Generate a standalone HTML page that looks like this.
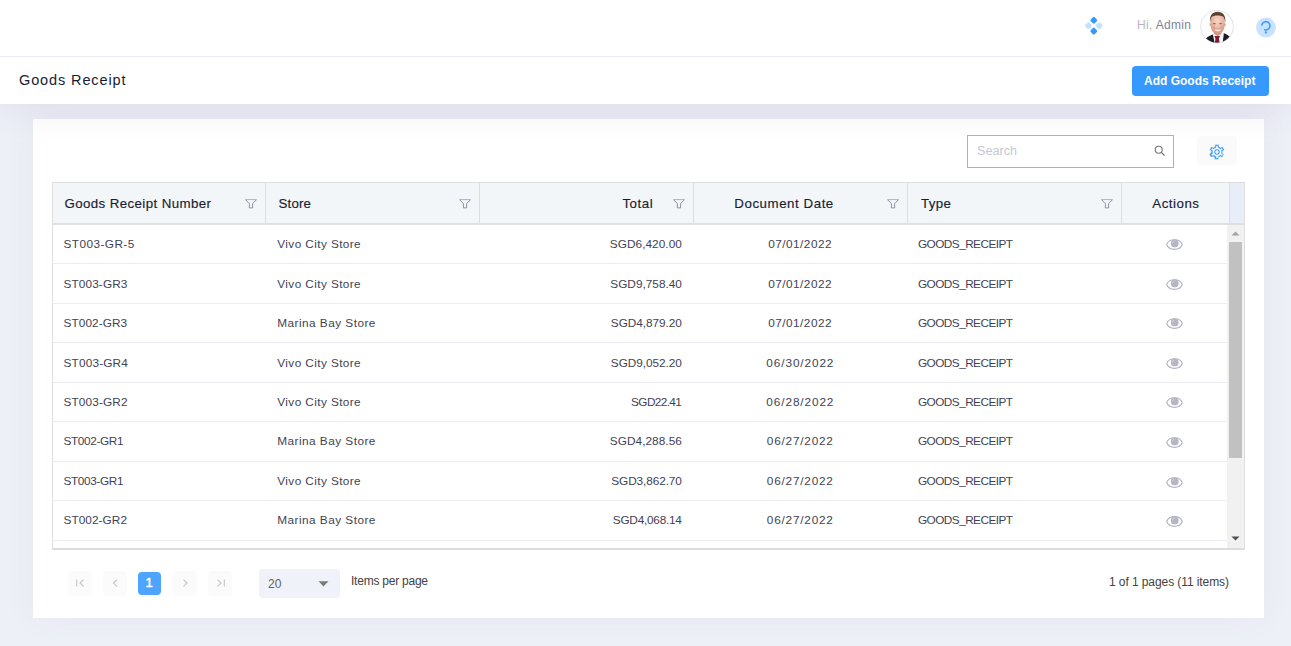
<!DOCTYPE html>
<html lang="en">
<head>
<meta charset="utf-8">
<title>Goods Receipt</title>
<style>
*{box-sizing:border-box;margin:0;padding:0}
html,body{width:1291px;height:646px;overflow:hidden}
body{background:#eef0f8;font-family:"Liberation Sans",sans-serif;color:#3f4254;position:relative}
.topbar{position:absolute;left:0;top:0;width:1291px;height:57px;background:#fff;border-bottom:1px solid #ebedf3}
.subhead{position:absolute;left:0;top:57px;width:1291px;height:47px;background:#fff;box-shadow:0 10px 30px 0 rgba(82,63,105,.08)}
.title{position:absolute;left:19px;top:69px;font-size:14.5px;line-height:22px;color:#181c32;white-space:nowrap;letter-spacing:0.882px}
.hi{position:absolute;top:16px;left:1137px;font-size:12px;letter-spacing:0.331px;line-height:18px;white-space:nowrap;color:#b5b5c3}
.hi b{font-weight:normal;color:#7e8299}
.addbtn{position:absolute;left:1132px;top:66px;width:137px;height:30px;border-radius:4px;background:#3699ff;color:#fff;font-size:12px;font-weight:bold;line-height:30px;padding-left:12px;white-space:nowrap;letter-spacing:0.004px}
.card{position:absolute;left:33px;top:119px;width:1231px;height:499px;background:#fff;box-shadow:0 0 30px 0 rgba(82,63,105,.05)}
.search{position:absolute;left:967px;top:135px;width:207px;height:33px;border:1px solid #b0b0b0;background:#fff}
.search span{position:absolute;left:9px;top:7px;letter-spacing:0.079px;font-size:12.5px;line-height:16px;color:#c5c7d2}
.search svg{position:absolute;left:185px;top:8px}
.gear{position:absolute;left:1197px;top:136px;width:40px;height:29px;border-radius:4px;background:#fafafb}
.gear svg{position:absolute;left:11px;top:6.500px}
.grid{position:absolute;left:52px;top:182px;width:1193px;height:368px;border:1px solid #dedede;border-bottom:2px solid #dcdcdc;background:#fff;overflow:hidden}
.ghead{position:absolute;left:0;top:0;width:1191px;height:42px;background:#f3f6f9;border-bottom:2px solid #dfdfdf}
.spacer{position:absolute;left:1176px;top:0;width:15px;height:40px;background:#e9edf8;border-left:1px solid #dcdde6}
.th{position:absolute;top:0;height:40px;font-size:13.3px;-webkit-text-stroke:.15px #181c32;color:#181c32;line-height:40px;white-space:nowrap}
.th.b{border-left:1px solid #dddddd}
.th span{position:absolute;top:1px}
.flt{position:absolute;top:16px}
.row{position:absolute;left:0;width:1174px;border-bottom:1px solid #ebedf3;font-size:11.8px;color:#3f4254;white-space:nowrap}
.row span{position:absolute;line-height:20px}
.eye{position:absolute;left:1112.500px}
.sb{position:absolute;left:1174px;top:42px;width:17px;height:324px;background:#f1f1f1}
.sb i{position:absolute;left:2px;top:17px;width:13px;height:216px;background:#c1c1c1}
.pg{position:absolute;top:571.200px;width:24px;height:24.500px;border-radius:4px;background:#fbfbfc}
.pg svg{position:absolute;left:0;top:0}
.pg.on{background:#4da5ff;color:#fff;font-size:13px;-webkit-text-stroke:.5px #fff;line-height:22px;text-align:center;top:572px;width:23px;height:23px;padding-right:1px}
.sel{position:absolute;left:259px;top:569px;width:81px;height:29px;border-radius:4px;background:#eff3f9;font-size:12px;line-height:29px;color:#616161}
.sel span{position:absolute;left:9px;top:1px}
.sel svg{position:absolute;left:59px;top:12px}
.ipp{position:absolute;left:351px;top:572px;font-size:12px;letter-spacing:-0.234px;line-height:18px;color:#424242;white-space:nowrap}
.info{position:absolute;left:1109px;top:573px;font-size:12px;letter-spacing:-0.084px;line-height:18px;color:#424242;white-space:nowrap}
</style>
</head>
<body>
<div class="card"></div>
<div class="subhead"></div>
<div class="topbar"></div>
<svg style="position:absolute;left:1084px;top:16px" width="20" height="20" viewBox="0 0 20 20">
<g transform="translate(9.800 9.700)">
<rect x="-2.800" y="-2.800" width="5.600" height="5.600" rx="1.300" transform="translate(0 -5.400) rotate(45)" fill="#3699ff"/>
<rect x="-2.800" y="-2.800" width="5.600" height="5.600" rx="1.300" transform="translate(0 5.400) rotate(45)" fill="#3699ff"/>
<rect x="-2.800" y="-2.800" width="5.600" height="5.600" rx="1.300" transform="translate(-5.400 0) rotate(45)" fill="#3699ff" opacity=".3"/>
<rect x="-2.800" y="-2.800" width="5.600" height="5.600" rx="1.300" transform="translate(5.400 0) rotate(45)" fill="#3699ff" opacity=".3"/>
</g></svg>
<div class="hi">Hi, <b>Admin</b></div>
<svg style="position:absolute;left:1200px;top:10px" width="34" height="34" viewBox="0 0 34 34">
<defs><clipPath id="av"><circle cx="17" cy="16.700" r="16"/></clipPath><filter id="bl" x="-20%" y="-20%" width="140%" height="140%"><feGaussianBlur stdDeviation="0.600"/></filter>
<radialGradient id="sk" cx="50%" cy="35%" r="65%"><stop offset="0" stop-color="#f6d6c6"/><stop offset=".6" stop-color="#e9b7a0"/><stop offset="1" stop-color="#d08f78"/></radialGradient>
<linearGradient id="hr" x1="0" y1="0" x2="0" y2="1"><stop offset="0" stop-color="#694735"/><stop offset="1" stop-color="#3a261d"/></linearGradient></defs>
<circle cx="17" cy="16.700" r="16.400" fill="#fff" stroke="#e1e3ec" stroke-width="1"/>
<g clip-path="url(#av)" filter="url(#bl)">
<path d="M5.800 28.400c1.700-1.600 4.400-3 7.200-4l4.700 2.500 6.300-3.700c2.600 1 4.600 2.200 6 3.900v8H5.800z" fill="#1b1b20"/>
<path d="M12.900 24.500l4.700-1.700 6.300.8-1.400 10h-7.800z" fill="#f7f7fb"/>
<path d="M14.400 26h5.600l-1.100 2.400 1 6h-5.400l1-6z" fill="#7b1d2f"/>
<path d="M14.300 20.500h6.800v3.800l-3.400 1.700-3.400-1.700z" fill="#d69680"/>
<path d="M10.700 10c0-4.500 2.900-6.500 6.900-6.500s7 2 7 6.500v5.200c0 4.800-3.600 9.600-7 9.600s-6.900-4.800-6.900-9.600z" fill="url(#sk)"/>
<ellipse cx="10.500" cy="14.600" rx=".9" ry="1.700" fill="#dca28b"/><ellipse cx="24.800" cy="14.600" rx=".9" ry="1.700" fill="#dca28b"/>
<path d="M10.100 12.800C9.200 5.600 12.600 1.800 17.600 1.800s8.600 3.800 7.600 11c-.3-2.500-.8-4.600-1.700-6-1.700-.9-3.700-1.400-5.900-1.400s-4.200.5-5.900 1.400c-.9 1.400-1.400 3.500-1.600 6z" fill="url(#hr)"/>
<ellipse cx="14.300" cy="13.700" rx="1.500" ry=".65" fill="#5b4036" opacity=".7"/><ellipse cx="20.600" cy="13.700" rx="1.500" ry=".65" fill="#5b4036" opacity=".7"/>
<ellipse cx="13.300" cy="17" rx="1.800" ry="1.400" fill="#e29a88" opacity=".6"/><ellipse cx="21.800" cy="17" rx="1.800" ry="1.400" fill="#e29a88" opacity=".6"/>
<path d="M14.500 18.700c2 .8 4.400.8 6.400 0-.6 1.700-1.900 2.500-3.200 2.500s-2.600-.8-3.200-2.500z" fill="#fbefeb"/>
<path d="M14.200 18.500c2.100.9 4.900.9 7 0" fill="none" stroke="#b5685c" stroke-width=".5"/>
</g></svg>
<svg style="position:absolute;left:1255px;top:17px" width="22" height="22" viewBox="0 0 22 22"><circle cx="11" cy="10.500" r="9.900" fill="#c9e2ff"/><path d="M6.800 8.100A4.100 4.100 0 1 1 9.600 12.700" fill="none" stroke="#3699ff" stroke-width="1.500" stroke-linecap="round"/><circle cx="10.900" cy="15.400" r="1.050" fill="#3699ff"/></svg>
<div class="title">Goods Receipt</div>
<div class="addbtn">Add Goods Receipt</div>
<div class="search"><span>Search</span><svg width="14" height="14" viewBox="0 0 14 14"><circle cx="5.700" cy="5.700" r="3.500" fill="none" stroke="#757575" stroke-width="1.100"/><path d="M8.300 8.300l3.200 3.200" stroke="#757575" stroke-width="1.200"/></svg></div>
<div class="gear"><svg width="18" height="18" viewBox="0 0 24 24"><path fill="#3699ff" stroke="#fafafb" stroke-width=".600" d="M19.430 12.980c.04-.32.070-.64.070-.98 0-.34-.03-.66-.07-.98l2.110-1.650c.19-.15.240-.42.120-.64l-2-3.460c-.09-.16-.26-.25-.44-.25-.06 0-.12.010-.17.030l-2.490 1c-.52-.4-1.080-.73-1.690-.98l-.38-2.650C14.460 2.180 14.250 2 14 2h-4c-.25 0-.46.180-.49.420l-.38 2.650c-.61.250-1.170.59-1.690.98l-2.490-1c-.06-.02-.12-.03-.18-.03-.17 0-.34.090-.43.250l-2 3.460c-.13.220-.07.490.12.640l2.110 1.650c-.4.320-.7.650-.7.980 0 .33.030.66.070.98l-2.110 1.650c-.19.150-.24.420-.12.640l2 3.460c.9.160.26.250.44.250.06 0 .12-.1.170-.03l2.490-1c.52.400 1.080.73 1.690.98l.38 2.650c.3.240.24.420.49.420h4c.25 0 .46-.18.490-.42l.38-2.650c.61-.25 1.170-.59 1.690-.98l2.490 1c.6.020.12.030.18.030.17 0 .34-.09.430-.25l2-3.460c.12-.22.070-.49-.12-.64l-2.110-1.650zm-1.980-1.710c.4.310.5.520.5.730 0 .21-.2.430-.5.730l-.14 1.130.89.700 1.080.84-.7 1.210-1.270-.51-1.040-.42-.9.680c-.43.320-.84.560-1.250.73l-1.060.43-.16 1.130-.2 1.350h-1.400l-.19-1.350-.16-1.130-1.060-.43c-.43-.18-.83-.41-1.230-.71l-.91-.7-1.060.43-1.270.51-.7-1.210 1.080-.84.890-.7-.14-1.130c-.03-.31-.05-.54-.05-.74s.02-.43.050-.73l.14-1.130-.89-.7-1.080-.84.700-1.210 1.270.51 1.040.42.900-.68c.43-.32.840-.56 1.250-.73l1.060-.43.160-1.130.2-1.350h1.390l.19 1.350.16 1.130 1.060.43c.43.180.83.410 1.230.71l.91.700 1.060-.43 1.270-.51.700 1.210-1.070.85-.89.700.14 1.130zM12 8c-2.210 0-4 1.790-4 4s1.790 4 4 4 4-1.790 4-4-1.790-4-4-4zm0 6c-1.100 0-2-.9-2-2s.9-2 2-2 2 .9 2 2-.9 2-2 2z"/></svg></div>
<div class="grid">
<div class="ghead">
<div class="th" style="left:0;width:213px"><span style="left:11.5px;letter-spacing:0.396px">Goods Receipt Number</span><svg class="flt" style="left:192.2px" width="12" height="10" viewBox="0 0 12 10"><path d="M0.500 0.600L4.400 4.700V8.900H7.600V4.700L11.500 0.600" fill="none" stroke="#82849a" stroke-width="0.900" stroke-linejoin="round"/><path d="M0.500 0.600h11" stroke="#9c9eb0" stroke-width="0.800"/></svg></div>
<div class="th b" style="left:212px;width:214px"><span style="left:12.5px;letter-spacing:0.177px">Store</span><svg class="flt" style="left:193.2px" width="12" height="10" viewBox="0 0 12 10"><path d="M0.500 0.600L4.400 4.700V8.900H7.600V4.700L11.500 0.600" fill="none" stroke="#82849a" stroke-width="0.900" stroke-linejoin="round"/><path d="M0.500 0.600h11" stroke="#9c9eb0" stroke-width="0.800"/></svg></div>
<div class="th b" style="left:426px;width:214px"><span style="left:142.4px;letter-spacing:0.551px">Total</span><svg class="flt" style="left:193.2px" width="12" height="10" viewBox="0 0 12 10"><path d="M0.500 0.600L4.400 4.700V8.900H7.600V4.700L11.500 0.600" fill="none" stroke="#82849a" stroke-width="0.900" stroke-linejoin="round"/><path d="M0.500 0.600h11" stroke="#9c9eb0" stroke-width="0.800"/></svg></div>
<div class="th b" style="left:640px;width:214px"><span style="left:40.3px;letter-spacing:0.549px">Document Date</span><svg class="flt" style="left:193.2px" width="12" height="10" viewBox="0 0 12 10"><path d="M0.500 0.600L4.400 4.700V8.900H7.600V4.700L11.500 0.600" fill="none" stroke="#82849a" stroke-width="0.900" stroke-linejoin="round"/><path d="M0.500 0.600h11" stroke="#9c9eb0" stroke-width="0.800"/></svg></div>
<div class="th b" style="left:854px;width:214px"><span style="left:13px;letter-spacing:0.322px">Type</span><svg class="flt" style="left:193.2px" width="12" height="10" viewBox="0 0 12 10"><path d="M0.500 0.600L4.400 4.700V8.900H7.600V4.700L11.500 0.600" fill="none" stroke="#82849a" stroke-width="0.900" stroke-linejoin="round"/><path d="M0.500 0.600h11" stroke="#9c9eb0" stroke-width="0.800"/></svg></div>
<div class="th b" style="left:1068px;width:108px"><span style="left:30.3px;letter-spacing:0.514px">Actions</span></div>
<div class="spacer"></div>
</div>
<div class="row" style="top:42px;height:39px"><span style="top:9px;left:10.5px;letter-spacing:0.434px">ST003-GR-5</span><span style="top:9px;left:224.3px;letter-spacing:0.398px">Vivo City Store</span><span style="top:9px;left:556.8px;letter-spacing:0.06px">SGD6,420.00</span><span style="top:9px;left:715.3px;letter-spacing:0.46px">07/01/2022</span><span style="top:9px;left:865px;letter-spacing:-0.553px">GOODS_RECEIPT</span><svg class="eye" style="top:14.15px" width="17" height="11" viewBox="0 0 17 11"><path d="M0.700 5.500C1.500 3.300 4.300 0.700 8.500 0.700s7 2.600 7.800 4.800C15.500 7.700 12.700 10.300 8.500 10.300S1.500 7.700 0.700 5.500z" fill="#fff" stroke="#b5b5c3" stroke-width="1.150"/><circle cx="8.700" cy="4.400" r="3.900" fill="#b5b5c3"/><path d="M6.500 4.300a2.300 2.300 0 0 1 2-2.200" fill="none" stroke="#dcdce4" stroke-width=".8"/></svg></div>
<div class="row" style="top:81px;height:40px"><span style="top:10px;left:10.5px;letter-spacing:0.117px">ST003-GR3</span><span style="top:10px;left:224.3px;letter-spacing:0.398px">Vivo City Store</span><span style="top:10px;left:557.3px;letter-spacing:0.01px">SGD9,758.40</span><span style="top:10px;left:715.3px;letter-spacing:0.46px">07/01/2022</span><span style="top:10px;left:865px;letter-spacing:-0.553px">GOODS_RECEIPT</span><svg class="eye" style="top:14.73px" width="17" height="11" viewBox="0 0 17 11"><path d="M0.700 5.500C1.500 3.300 4.300 0.700 8.500 0.700s7 2.600 7.800 4.800C15.500 7.700 12.700 10.300 8.500 10.300S1.500 7.700 0.700 5.500z" fill="#fff" stroke="#b5b5c3" stroke-width="1.150"/><circle cx="8.700" cy="4.400" r="3.900" fill="#b5b5c3"/><path d="M6.500 4.300a2.300 2.300 0 0 1 2-2.200" fill="none" stroke="#dcdce4" stroke-width=".8"/></svg></div>
<div class="row" style="top:121px;height:39px"><span style="top:9px;left:10.5px;letter-spacing:0.08px">ST002-GR3</span><span style="top:9px;left:224.3px;letter-spacing:0.462px">Marina Bay Store</span><span style="top:9px;left:557.8px;letter-spacing:-0.04px">SGD4,879.20</span><span style="top:9px;left:715.3px;letter-spacing:0.46px">07/01/2022</span><span style="top:9px;left:865px;letter-spacing:-0.553px">GOODS_RECEIPT</span><svg class="eye" style="top:14.31px" width="17" height="11" viewBox="0 0 17 11"><path d="M0.700 5.500C1.500 3.300 4.300 0.700 8.500 0.700s7 2.600 7.800 4.800C15.500 7.700 12.700 10.300 8.500 10.300S1.500 7.700 0.700 5.500z" fill="#fff" stroke="#b5b5c3" stroke-width="1.150"/><circle cx="8.700" cy="4.400" r="3.900" fill="#b5b5c3"/><path d="M6.500 4.300a2.300 2.300 0 0 1 2-2.200" fill="none" stroke="#dcdce4" stroke-width=".8"/></svg></div>
<div class="row" style="top:160px;height:40px"><span style="top:10px;left:10.5px;letter-spacing:0.18px">ST003-GR4</span><span style="top:10px;left:224.3px;letter-spacing:0.398px">Vivo City Store</span><span style="top:10px;left:557.8px;letter-spacing:-0.04px">SGD9,052.20</span><span style="top:10px;left:713.35px;letter-spacing:0.893px">06/30/2022</span><span style="top:10px;left:865px;letter-spacing:-0.553px">GOODS_RECEIPT</span><svg class="eye" style="top:14.89px" width="17" height="11" viewBox="0 0 17 11"><path d="M0.700 5.500C1.500 3.300 4.300 0.700 8.500 0.700s7 2.600 7.800 4.800C15.500 7.700 12.700 10.300 8.500 10.300S1.500 7.700 0.700 5.500z" fill="#fff" stroke="#b5b5c3" stroke-width="1.150"/><circle cx="8.700" cy="4.400" r="3.900" fill="#b5b5c3"/><path d="M6.500 4.300a2.300 2.300 0 0 1 2-2.200" fill="none" stroke="#dcdce4" stroke-width=".8"/></svg></div>
<div class="row" style="top:200px;height:39px"><span style="top:9px;left:10.5px;letter-spacing:0.13px">ST003-GR2</span><span style="top:9px;left:224.3px;letter-spacing:0.398px">Vivo City Store</span><span style="top:9px;left:578.1px;letter-spacing:-0.614px">SGD22.41</span><span style="top:9px;left:713.35px;letter-spacing:0.893px">06/28/2022</span><span style="top:9px;left:865px;letter-spacing:-0.553px">GOODS_RECEIPT</span><svg class="eye" style="top:14.47px" width="17" height="11" viewBox="0 0 17 11"><path d="M0.700 5.500C1.500 3.300 4.300 0.700 8.500 0.700s7 2.600 7.800 4.800C15.500 7.700 12.700 10.300 8.500 10.300S1.500 7.700 0.700 5.500z" fill="#fff" stroke="#b5b5c3" stroke-width="1.150"/><circle cx="8.700" cy="4.400" r="3.900" fill="#b5b5c3"/><path d="M6.500 4.300a2.300 2.300 0 0 1 2-2.200" fill="none" stroke="#dcdce4" stroke-width=".8"/></svg></div>
<div class="row" style="top:239px;height:40px"><span style="top:9px;left:10.5px;letter-spacing:-0.37px">ST002-GR1</span><span style="top:9px;left:224.3px;letter-spacing:0.462px">Marina Bay Store</span><span style="top:9px;left:556.8px;letter-spacing:0.06px">SGD4,288.56</span><span style="top:9px;left:713.85px;letter-spacing:0.782px">06/27/2022</span><span style="top:9px;left:865px;letter-spacing:-0.553px">GOODS_RECEIPT</span><svg class="eye" style="top:15.05px" width="17" height="11" viewBox="0 0 17 11"><path d="M0.700 5.500C1.500 3.300 4.300 0.700 8.500 0.700s7 2.600 7.800 4.800C15.500 7.700 12.700 10.300 8.500 10.300S1.500 7.700 0.700 5.500z" fill="#fff" stroke="#b5b5c3" stroke-width="1.150"/><circle cx="8.700" cy="4.400" r="3.900" fill="#b5b5c3"/><path d="M6.500 4.300a2.300 2.300 0 0 1 2-2.200" fill="none" stroke="#dcdce4" stroke-width=".8"/></svg></div>
<div class="row" style="top:279px;height:39px"><span style="top:9px;left:10.5px;letter-spacing:-0.37px">ST003-GR1</span><span style="top:9px;left:224.3px;letter-spacing:0.398px">Vivo City Store</span><span style="top:9px;left:558.3px;letter-spacing:-0.09px">SGD3,862.70</span><span style="top:9px;left:713.85px;letter-spacing:0.782px">06/27/2022</span><span style="top:9px;left:865px;letter-spacing:-0.553px">GOODS_RECEIPT</span><svg class="eye" style="top:14.63px" width="17" height="11" viewBox="0 0 17 11"><path d="M0.700 5.500C1.500 3.300 4.300 0.700 8.500 0.700s7 2.600 7.800 4.800C15.500 7.700 12.700 10.300 8.500 10.300S1.500 7.700 0.700 5.500z" fill="#fff" stroke="#b5b5c3" stroke-width="1.150"/><circle cx="8.700" cy="4.400" r="3.900" fill="#b5b5c3"/><path d="M6.500 4.300a2.300 2.300 0 0 1 2-2.200" fill="none" stroke="#dcdce4" stroke-width=".8"/></svg></div>
<div class="row" style="top:318px;height:40px"><span style="top:9px;left:10.5px;letter-spacing:0.067px">ST002-GR2</span><span style="top:9px;left:224.3px;letter-spacing:0.462px">Marina Bay Store</span><span style="top:9px;left:559.8px;letter-spacing:-0.24px">SGD4,068.14</span><span style="top:9px;left:713.85px;letter-spacing:0.782px">06/27/2022</span><span style="top:9px;left:865px;letter-spacing:-0.553px">GOODS_RECEIPT</span><svg class="eye" style="top:15.21px" width="17" height="11" viewBox="0 0 17 11"><path d="M0.700 5.500C1.500 3.300 4.300 0.700 8.500 0.700s7 2.600 7.800 4.800C15.500 7.700 12.700 10.300 8.500 10.300S1.500 7.700 0.700 5.500z" fill="#fff" stroke="#b5b5c3" stroke-width="1.150"/><circle cx="8.700" cy="4.400" r="3.900" fill="#b5b5c3"/><path d="M6.500 4.300a2.300 2.300 0 0 1 2-2.200" fill="none" stroke="#dcdce4" stroke-width=".8"/></svg></div>
<div class="sb"><i></i>
<svg style="position:absolute;left:4px;top:6px" width="9" height="5" viewBox="0 0 9 5"><path d="M0.500 4.500L4.500 0.500l4 4z" fill="#a3a3a3"/></svg>
<svg style="position:absolute;left:4px;top:311px" width="9" height="5" viewBox="0 0 9 5"><path d="M0.500 0.500L4.500 4.500l4-4z" fill="#505050"/></svg>
</div>
</div>
<div class="pg" style="left:68px"><svg width="24" height="24" viewBox="0 0 24 24"><path d="M8.700 8.500v7" stroke="#c4c4c8" stroke-width="1.100"/><path d="M15.500 8.600L12 12l3.500 3.400" fill="none" stroke="#c4c4c8" stroke-width="1.100"/></svg></div>
<div class="pg" style="left:103px"><svg width="24" height="24" viewBox="0 0 24 24"><path d="M14 8.600L10.500 12l3.500 3.400" fill="none" stroke="#c4c4c8" stroke-width="1.100"/></svg></div>
<div class="pg on" style="left:138px">1</div>
<div class="pg" style="left:173px"><svg width="24" height="24" viewBox="0 0 24 24"><path d="M10.500 8.600L14 12l-3.500 3.400" fill="none" stroke="#c4c4c8" stroke-width="1.100"/></svg></div>
<div class="pg" style="left:208px"><svg width="24" height="24" viewBox="0 0 24 24"><path d="M16.300 8.500v7" stroke="#c4c4c8" stroke-width="1.100"/><path d="M9.500 8.600L13 12l-3.500 3.400" fill="none" stroke="#c4c4c8" stroke-width="1.100"/></svg></div>
<div class="sel"><span>20</span><svg width="11" height="6" viewBox="0 0 11 6"><path d="M0.500 0.300h10L5.500 5.600z" fill="#7b7b7b"/></svg></div>
<div class="ipp">Items per page</div>
<div class="info">1 of 1 pages (11 items)</div>
</body>
</html>
